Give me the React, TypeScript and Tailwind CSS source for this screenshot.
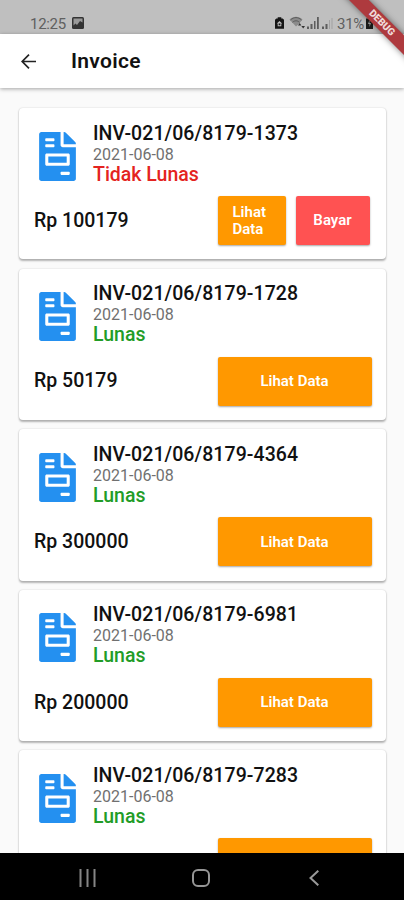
import { FaFileInvoice } from "react-icons/fa";

type Invoice = { id: string; paid: boolean; amount?: string };

const invoices: Invoice[] = [
  { id: "INV-021/06/8179-1373", paid: false, amount: "Rp 100179" },
  { id: "INV-021/06/8179-1728", paid: true, amount: "Rp 50179" },
  { id: "INV-021/06/8179-4364", paid: true, amount: "Rp 300000" },
  { id: "INV-021/06/8179-6981", paid: true, amount: "Rp 200000" },
  { id: "INV-021/06/8179-7283", paid: true },
];

function StatusBar() {
  return (
    <div className="flex h-[34px] shrink-0 items-end bg-[#bfbfbf] pb-[1px] pl-[30px] text-[#606060]">
      <span className="w-[42px] text-[15px] leading-[18px] tracking-[-0.3px]">12:25</span>
      <svg className="mb-[4px] h-3 w-3" viewBox="0 0 12 12">
        <rect width="12" height="12" rx="1.5" fill="#333" />
        <path d="M1.5 1.5h9v4L8 4 5 8 3.5 6.5l-2 2z" fill="#999" />
      </svg>
      <svg className="mb-[4px] ml-[191px] h-[12px] w-[9px]" viewBox="0 0 10 13">
        <path d="M3 0h4v1.5h1.5L10 3v10H0V3l1.500-1.500H3z" fill="#151515" />
        <path d="M5 4.200 8 7H7v3H3V7H2z" fill="#bfbfbf" />
        <rect x="4" y="7" width="2" height="2" fill="#151515" />
      </svg>
      <svg className="mb-[4px] ml-[5px] h-[13px] w-[16px]" viewBox="0 0 16 13">
        <path d="M.5 3.500C4-.2 10-.2 13.500 3.500L9.500 8.200 7 10.500z" fill="#8b8b8b" />
        <path d="M1.500 4C5 .8 9 .8 12.500 4M3.500 6.300c2.200-2 4.800-2 7 0" fill="none" stroke="#5c5c5c" />
        <path d="m9 9.500 1.700-2.500 1.700 2.500zM12.300 10H16l-1.800 2.500z" fill="#333" />
      </svg>
      <svg className="mb-[4px] ml-[2px] h-3 w-[26px]" viewBox="0 0 26 12">
        <path d="M0 9.500h2V12H0zM3.500 7h2v5h-2zM7 4h1.500v8H7zM10 0h1.800v12H10zM15 9.500h2V12h-2zM18.500 7h2v5h-2z" fill="#5d5d5d" />
        <path d="M22 3h1v9h-1zM24.500 1h1v11h-1z" fill="#a2a2a2" />
      </svg>
      <span className="ml-[4px] w-[28px] text-[15px] leading-[18px] tracking-[-0.3px]">31%</span>
      <svg className="mb-[4px] ml-[1px] h-3 w-[7px]" viewBox="0 0 7 12">
        <path d="M2 0h3v1.500h2V12H0V1.500h2z" fill="#1c1c1c" />
        <path d="M3.500 3 2 7h1.500v3L5 6H3.500z" fill="#aaa" />
      </svg>
    </div>
  );
}

function InvoiceCard({ id, paid, amount }: Invoice) {
  return (
    <article className="h-[151.400px] shrink-0 rounded-[4px] bg-white px-[15px] pt-[14px] shadow-[0_1.500px_2px_rgba(0,0,0,0.28),0_0_2px_rgba(0,0,0,0.12)]">
      <div className="flex h-[64px]">
        <FaFileInvoice className="mt-[9.500px] ml-[5px] h-[49px] w-[37px] text-[#2490f0]" />
        <div className="ml-[17px] pt-[0.700px] whitespace-nowrap">
          <div className="h-[22px] text-[19.500px] leading-[22px] font-medium tracking-[0.070px] text-[#111]">{id}</div>
          <div className="h-[19px] text-[16px] leading-[20px] text-[#707070]">2021-06-08</div>
          <div className={`text-[19.500px] leading-[22px] font-medium ${paid ? "text-[#229c27]" : "text-[#e42320]"}`}>
            {paid ? "Lunas" : "Tidak Lunas"}
          </div>
        </div>
      </div>
      <div className="mt-[10px] flex h-[49px] items-center">
        <div className="w-[183.500px] shrink-0 text-[19.500px] font-medium text-[#111]">{amount}</div>
        <button
          className={`flex h-[49px] shrink-0 items-center rounded-[2px] bg-[#ff9800] pt-[1px] text-left text-[15px] leading-[17px] font-semibold text-white shadow-[0_1px_2px_rgba(0,0,0,0.35)] ${paid ? "w-[154px] justify-center" : "w-[68.500px] pl-[15px]"}`}
        >
          {paid ? amount && "Lihat Data" : <span>Lihat<br />Data</span>}
        </button>
        {!paid && (
          <button className="ml-[9.500px] h-[49px] w-[74px] shrink-0 rounded-[2px] bg-[#ff5252] text-[15px] font-semibold text-white shadow-[0_1px_2px_rgba(0,0,0,0.35)]">
            Bayar
          </button>
        )}
      </div>
    </article>
  );
}

export default function App() {
  return (
    <div className="relative flex h-[900px] w-[404px] flex-col overflow-hidden bg-[#fafafa] font-['Roboto',sans-serif]">
      <StatusBar />
      <header className="z-10 flex h-[54px] shrink-0 items-center bg-white pl-[20.500px] shadow-[0_1px_4px_rgba(0,0,0,0.35)]">
        <svg className="h-[15px] w-[15px]" viewBox="0 0 15 15" fill="none" stroke="#222" strokeWidth="1.700">
          <path d="M15 7.500H1.200M8 .7 1.200 7.500 8 14.300" />
        </svg>
        <h1 className="ml-[35.500px] pt-[1px] text-[21px] font-semibold tracking-[0.300px] text-[#111]">Invoice</h1>
      </header>
      <main className="flex min-h-0 flex-1 flex-col gap-[9.200px] overflow-hidden pt-[20px] pr-[18px] pl-[19px]">
        {invoices.map((invoice) => (
          <InvoiceCard key={invoice.id} {...invoice} />
        ))}
      </main>
      <nav className="z-10 flex h-[47px] shrink-0 items-center bg-black pt-[3px]">
        <svg className="ml-[79px] h-[18px] w-[17px]" viewBox="0 0 17 18" fill="none" stroke="#858585" strokeWidth="2">
          <path d="M1.500 0v18M8.500 0v18M15.500 0v18" />
        </svg>
        <svg className="ml-[96px] h-[18px] w-[18px]" viewBox="0 0 18 18" fill="none" stroke="#969696" strokeWidth="2">
          <rect x="1" y="1" width="16" height="16" rx="5" />
        </svg>
        <svg className="ml-[99px] h-[16px] w-[10px]" viewBox="0 0 10 16" fill="none" stroke="#999" strokeWidth="2">
          <path d="M9.300.7 1.500 8l7.800 7.300" />
        </svg>
      </nav>
      <div className="absolute top-[15.500px] left-[321.500px] z-20 flex h-[13.500px] w-[120px] rotate-45 items-center justify-center bg-[#ae3a3e] text-[10px] leading-none font-black text-[#f0dada] shadow-[0_0_6px_rgba(0,0,0,0.5)]">
        DEBUG
      </div>
    </div>
  );
}
